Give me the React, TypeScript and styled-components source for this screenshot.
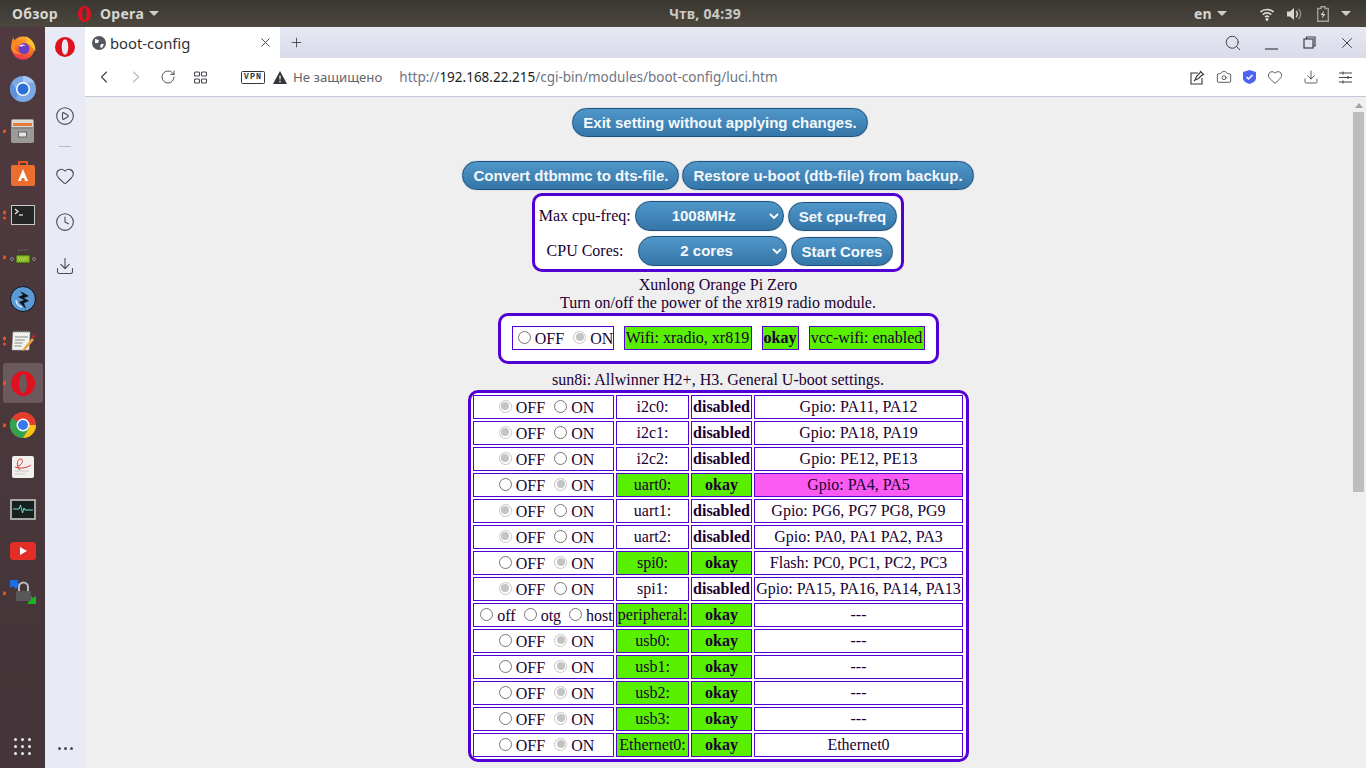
import React from 'react';
import styled, { createGlobalStyle } from 'styled-components';
import { ChevronLeft, ChevronRight, RotateCw, Search, X, Plus, Heart, Clock, Download, Camera, CirclePlay } from 'lucide-react';

const GlobalStyle = createGlobalStyle`
  html, body {
    margin: 0;
    padding: 0;
    overflow: hidden;
  }
`;

const Screen = styled.div`
  width: 1366px;
  height: 768px;
  display: flex;
  flex-direction: column;
  overflow: hidden;
  font-family: 'Liberation Serif', serif;
`;

const TopBar = styled.div`
  height: 27px;
  flex: none;
  display: grid;
  grid-template-columns: 1fr auto 1fr;
  align-items: center;
  background: linear-gradient(#3a3731, #4c4840);
  color: #d6d6d2;
  font: 700 14px 'Noto Sans', sans-serif;
  letter-spacing: 0.3px;
`;

const TopLeft = styled.div`
  display: flex;
  align-items: center;
  padding-left: 12px;
  gap: 20px;
`;

const AppMenu = styled.div`
  display: flex;
  align-items: center;
  gap: 5px;
`;

const AppName = styled.span`
  margin-left: 4px;
`;

const TopClock = styled.span`
  padding-left: 44px;
  color: #c9c9c5;
`;

const TopRight = styled.div`
  display: flex;
  align-items: center;
  justify-content: flex-end;
  padding-right: 15px;
`;

const TrayItem = styled.span<{ $ml: number }>`
  display: flex;
  margin-left: ${(p) => p.$ml}px;
`;

const Caret = styled.span`
  width: 0;
  height: 0;
  border-left: 5px solid transparent;
  border-right: 5px solid transparent;
  border-top: 5px solid #cfcfca;
`;

const Main = styled.div`
  flex: 1;
  display: flex;
  min-height: 0;
`;

const Dock = styled.div`
  width: 45px;
  flex: none;
  background: linear-gradient(#503a3f, #433539);
  display: flex;
  flex-direction: column;
  align-items: center;
  gap: 2px;
`;

const DockSlot = styled.div<{ $active?: boolean }>`
  position: relative;
  width: 40px;
  height: 40px;
  flex: none;
  display: flex;
  align-items: center;
  justify-content: center;
  border-radius: 3px;
  background: ${(p) => (p.$active ? '#6a5a5e' : 'transparent')};
`;

const Pips = styled.div`
  position: absolute;
  left: 0;
  top: 50%;
  transform: translateY(-50%);
  display: flex;
  flex-direction: column;
  gap: 2px;
`;

const Pip = styled.span`
  width: 3.5px;
  height: 3.5px;
  border-radius: 50%;
  background: #e95420;
`;

const DockGrid = styled.div`
  margin-top: auto;
  margin-bottom: 13px;
  display: grid;
  grid-template-columns: repeat(3, 3px);
  gap: 4px;
`;

const DockDot = styled.span`
  width: 3px;
  height: 3px;
  background: #eee;
  border-radius: 50%;
`;

const Browser = styled.div`
  flex: 1;
  display: flex;
  min-width: 0;
`;

const SideRail = styled.div`
  width: 40px;
  flex: none;
  background: #e8ebf5;
  display: flex;
  flex-direction: column;
  align-items: center;
  color: #4a4c52;
`;

const RailLogo = styled.div`
  height: 40px;
  display: flex;
  align-items: center;
  justify-content: center;
`;

const RailItem = styled.div<{ $mt: number }>`
  margin-top: ${(p) => p.$mt}px;
  display: flex;
`;

const RailDivider = styled.div`
  width: 12px;
  height: 1px;
  background: #b9bcc6;
  margin-top: 20px;
`;

const RailMore = styled.div`
  margin-top: auto;
  margin-bottom: 18px;
  display: flex;
  gap: 3px;
`;

const RailDot = styled.span`
  width: 3px;
  height: 3px;
  border-radius: 50%;
  background: #4a4c52;
`;

const BrowserBody = styled.div`
  flex: 1;
  display: flex;
  flex-direction: column;
  min-width: 0;
`;

const TabStrip = styled.div`
  height: 31px;
  flex: none;
  display: flex;
  align-items: center;
  background: linear-gradient(#e6e9f4, #d9dce8);
  color: #3e4046;
`;

const Tab = styled.div`
  width: 195px;
  height: 31px;
  background: #fff;
  display: flex;
  align-items: center;
  padding: 0 7px;
  box-sizing: border-box;
  gap: 4px;
  font: 14.8px 'Noto Sans', sans-serif;
  color: #2f3136;
`;

const TabTitle = styled.span`
  flex: 1;
`;

const TabPlus = styled.div`
  display: flex;
  margin-left: 9px;
`;

const WindowControls = styled.div`
  margin-left: auto;
  display: flex;
  align-items: center;
`;

const WindowSlot = styled.div`
  width: 38px;
  display: flex;
  justify-content: center;
`;

const AddressBar = styled.div`
  height: 38px;
  flex: none;
  background: #fff;
  border-bottom: 1px solid #c3c7d6;
  display: flex;
  align-items: center;
  color: #44464c;
`;

const NavGroup = styled.div`
  display: flex;
  align-items: center;
  gap: 12px;
  padding-left: 9px;
`;

const ReloadIcon = styled(RotateCw)`
  margin-left: 2px;
`;

const SpeedDial = styled.svg`
  margin-left: 6px;
`;

const VpnBadge = styled.span`
  margin-left: 34px;
  box-sizing: border-box;
  width: 24px;
  height: 13px;
  display: flex;
  align-items: center;
  justify-content: center;
  font: 700 8.5px 'Liberation Mono', monospace;
  letter-spacing: 1px;
  border: 1px solid #33353a;
  border-radius: 1.5px;
  color: #33353a;
`;

const WarnIcon = styled.svg`
  margin-left: 8px;
`;

const Insecure = styled.span`
  margin-left: 6px;
  font: 13.2px 'Noto Sans', sans-serif;
  color: #62646a;
`;

const Url = styled.span`
  margin-left: 17px;
  font: 13.5px 'Noto Sans', sans-serif;
  color: #6d7484;
`;

const UrlHost = styled.span`
  color: #1c1d20;
`;

const AddressTools = styled.div`
  margin-left: auto;
  display: flex;
  align-items: center;
  gap: 11px;
  padding-right: 14px;
`;

const ToolGap = styled.span`
  display: flex;
  margin-left: 9px;
`;

const PageRow = styled.div`
  flex: 1;
  display: flex;
  min-height: 0;
`;

const Page = styled.div`
  flex: 1;
  background: #efefef;
  display: flex;
  flex-direction: column;
  align-items: center;
  font-size: 16px;
  color: #1a0033;
  padding-top: 11px;
  min-width: 0;
`;

const Scrollbar = styled.div`
  width: 15px;
  flex: none;
  background: #efefef;
  display: flex;
  flex-direction: column;
  padding-top: 6px;
  box-sizing: border-box;
`;

const ScrollArrow = styled.span`
  width: 0;
  height: 0;
  margin-left: 4px;
  border-left: 4px solid transparent;
  border-right: 4px solid transparent;
  border-bottom: 5px solid #a3a3a3;
`;

const ScrollThumb = styled.div`
  height: 380px;
  width: 11px;
  margin: 4px 0 0 2px;
  background: #bdbdbd;
`;

const PillButton = styled.div<{ $h?: number }>`
  height: ${(p) => p.$h ?? 29}px;
  box-sizing: border-box;
  padding: 0 10px;
  display: flex;
  align-items: center;
  justify-content: center;
  border-radius: 15px;
  border: 1px solid #1c527f;
  box-shadow: 0 0 1px rgba(20, 50, 80, 0.5);
  background: linear-gradient(#5097c9, #3575a8);
  color: #f4f8fb;
  font: 700 15px 'Liberation Sans', sans-serif;
  white-space: nowrap;
  flex: none;
`;

const ExitButton = styled(PillButton)`
  margin-left: 4px;
`;

const ButtonRow = styled.div`
  display: flex;
  gap: 3px;
  margin-top: 24px;
  margin-bottom: 3px;
`;

const Frame = styled.div`
  border: 3px solid #5300d5;
  border-radius: 10px;
  background: #fff;
  box-sizing: border-box;
`;

const CpuFrame = styled(Frame)`
  width: 372px;
  height: 79px;
  padding-top: 5px;
  display: flex;
  flex-direction: column;
  align-items: center;
  gap: 5px;
`;

const CpuRow = styled.div<{ $shift?: number }>`
  display: flex;
  align-items: flex-end;
  gap: 4px;
  padding-left: ${(p) => p.$shift ?? 0}px;
`;

const CpuLabel = styled.span<{ $w: number }>`
  width: ${(p) => p.$w}px;
  align-self: center;
`;

const SelectPill = styled(PillButton)`
  position: relative;
  width: 149px;
  padding: 0 21px 1px 10px;
`;

const SelectArrow = styled.svg`
  position: absolute;
  right: 4px;
  top: 11px;
`;

const Caption = styled.div<{ $mt: number }>`
  text-align: center;
  line-height: 18px;
  margin-top: ${(p) => p.$mt}px;
`;

const WifiFrame = styled(Frame)`
  width: 441px;
  height: 51px;
  margin-top: 1px;
  padding-bottom: 1px;
  display: flex;
  align-items: center;
  justify-content: center;
  gap: 10px;
`;

const Cell = styled.div<{ $green?: boolean; $pink?: boolean; $bold?: boolean; $w?: number }>`
  box-sizing: border-box;
  height: 24px;
  flex: none;
  width: ${(p) => (p.$w ? `${p.$w}px` : 'auto')};
  display: flex;
  align-items: center;
  justify-content: center;
  border: 1px solid #5300d5;
  white-space: nowrap;
  font-weight: ${(p) => (p.$bold ? 700 : 400)};
  background: ${(p) => (p.$green ? '#58ef00' : p.$pink ? '#fb5bf1' : '#fff')};
`;

const RadioCell = styled(Cell)`
  padding-left: 6px;
`;

const Radio = styled.span<{ $on?: boolean }>`
  display: inline-block;
  position: relative;
  box-sizing: border-box;
  width: 13px;
  height: 13px;
  border-radius: 50%;
  border: 1px solid ${(p) => (p.$on ? '#c4c4c4' : '#767676')};
  background: #fff;
  margin: 0 4px 3px 0;
  flex: none;

  &::after {
    content: '';
    display: ${(p) => (p.$on ? 'block' : 'none')};
    position: absolute;
    inset: 1.5px;
    border-radius: 50%;
    background: #c4c4c4;
  }
`;

const RadioLabel = styled.span`
  display: inline-flex;
  align-items: center;
  margin-top: 1px;
`;

const RadioGroup = styled.div<{ $gap: number }>`
  display: flex;
  align-items: center;
  gap: ${(p) => p.$gap}px;
`;

const BoardFrame = styled(Frame)`
  width: 501px;
  margin-top: 1px;
  padding: 2px 3px;
  display: flex;
  flex-direction: column;
  gap: 2px;
`;

const BoardRow = styled.div`
  display: grid;
  grid-template-columns: 141px 73px 61px 209px;
  gap: 2px;
  justify-content: center;
`;

interface RowData {
  name: string;
  on: boolean;
  info: string;
  pink?: boolean;
  usb?: boolean;
}

const rows: RowData[] = [
  { name: 'i2c0:', on: false, info: 'Gpio: PA11, PA12' },
  { name: 'i2c1:', on: false, info: 'Gpio: PA18, PA19' },
  { name: 'i2c2:', on: false, info: 'Gpio: PE12, PE13' },
  { name: 'uart0:', on: true, info: 'Gpio: PA4, PA5', pink: true },
  { name: 'uart1:', on: false, info: 'Gpio: PG6, PG7 PG8, PG9' },
  { name: 'uart2:', on: false, info: 'Gpio: PA0, PA1 PA2, PA3' },
  { name: 'spi0:', on: true, info: 'Flash: PC0, PC1, PC2, PC3' },
  { name: 'spi1:', on: false, info: 'Gpio: PA15, PA16, PA14, PA13' },
  { name: 'peripheral:', on: true, info: '---', usb: true },
  { name: 'usb0:', on: true, info: '---' },
  { name: 'usb1:', on: true, info: '---' },
  { name: 'usb2:', on: true, info: '---' },
  { name: 'usb3:', on: true, info: '---' },
  { name: 'Ethernet0:', on: true, info: 'Ethernet0' },
];

const OperaLogo = ({ w, h }: { w: number; h: number }) => (
  <svg width={w} height={h} viewBox="0 0 24 24" preserveAspectRatio="none">
    <path
      fill="#e0101f"
      fillRule="evenodd"
      d="M12 0a12 12 0 1 0 0 24 12 12 0 0 0 0-24Zm0 2.8c-2.300 0-3.900 4-3.900 9.200s1.600 9.200 3.900 9.200 3.900-4 3.900-9.200-1.600-9.200-3.900-9.200Z"
    />
  </svg>
);

const DockIcons: { key: string; pips: number; active?: boolean; icon: React.ReactNode }[] = [
  {
    key: 'firefox',
    pips: 0,
    icon: (
      <svg width="26" height="26" viewBox="0 0 26 26">
        <defs>
          <linearGradient id="foxBody" x1="0.7" y1="0" x2="0.3" y2="1">
            <stop offset="0" stopColor="#ffb52b" />
            <stop offset="0.6" stopColor="#f6672a" />
            <stop offset="1" stopColor="#ee2d5c" />
          </linearGradient>
        </defs>
        <circle cx="13" cy="14" r="11.500" fill="url(#foxBody)" />
        <path d="M15 0c1 3 4 4 6.500 6.500 3 3 4.500 7 3.500 11-2-4-5-7.500-9-8.500 1-3 1-6-1-9Z" fill="#ffc22e" />
        <path d="M1.500 10c0-3 1-5 2-6.500 0 2 1 3 2 3.500 2-1 5-1 7 0-2 1-3 2-3 3.500-3 0-4.500 1-4.500 3.500 0 3 3.500 5.500 8 5-6 3-14-1-11.500-9Z" fill="#fb8a24" />
        <circle cx="14" cy="14.500" r="5.500" fill="#6a3fc0" />
        <path d="M9 11.500c2-1.500 5-1.500 7 0-2 0-4 .5-5 1.500Z" fill="#f2d0ff" />
      </svg>
    ),
  },
  {
    key: 'chromium',
    pips: 0,
    icon: (
      <svg width="26" height="26" viewBox="0 0 26 26">
        <circle cx="13" cy="13" r="13" fill="#7aa9e6" />
        <path d="M13 0a13 13 0 0 1 11.300 6.500H13Z" fill="#a5c8f0" />
        <path d="M1.700 6.500L8 17l-2 6A13 13 0 0 1 1.700 6.500Z" fill="#5c8edb" />
        <circle cx="13" cy="13" r="7" fill="#fff" />
        <circle cx="13" cy="13" r="5.500" fill="#2c6fd6" />
      </svg>
    ),
  },
  {
    key: 'files',
    pips: 1,
    icon: (
      <svg width="23" height="24" viewBox="0 0 23 24">
        <rect width="23" height="24" rx="2" fill="#9a9a98" />
        <rect x="1" y="1" width="21" height="7" fill="#d9d9d6" />
        <rect x="2" y="4" width="19" height="3" fill="#e8793a" />
        <path d="M1 9h21" stroke="#777" />
        <rect x="7.500" y="13" width="8" height="5" fill="#e4e4e2" stroke="#666" />
      </svg>
    ),
  },
  {
    key: 'software',
    pips: 0,
    icon: (
      <svg width="24" height="25" viewBox="0 0 24 25">
        <path d="M8 4V1h8v3" fill="none" stroke="#e95420" strokeWidth="2" />
        <rect y="4" width="24" height="21" rx="2" fill="#ed6d2f" />
        <path d="M12 8l5 12h-3l-.8-3h-2.400L10 20H7Z" fill="#fff" />
      </svg>
    ),
  },
  {
    key: 'terminal',
    pips: 2,
    icon: (
      <svg width="24" height="20" viewBox="0 0 24 20">
        <rect width="24" height="20" fill="#c8c8c6" />
        <rect x="1" y="1" width="22" height="18" fill="#262626" />
        <path d="M4 4l3 2.500L4 9" stroke="#eee" strokeWidth="1.200" fill="none" />
        <path d="M8 10h4" stroke="#eee" strokeWidth="1.200" />
      </svg>
    ),
  },
  {
    key: 'serial',
    pips: 1,
    icon: (
      <svg width="26" height="18" viewBox="0 0 26 18">
        <circle cx="2" cy="11" r="1.500" fill="none" stroke="#888" />
        <circle cx="24" cy="11" r="1.500" fill="none" stroke="#888" />
        <rect x="6" y="7" width="14" height="8" rx="1" fill="#86b82a" stroke="#2f4d12" />
        <path d="M8 10h10M9 12h8" stroke="#dbe86a" strokeDasharray="1 1" />
        <path d="M8 2h10" stroke="#5c5456" strokeDasharray="2 1" strokeWidth="2" />
      </svg>
    ),
  },
  {
    key: 'bolt',
    pips: 0,
    icon: (
      <svg width="26" height="26" viewBox="0 0 26 26">
        <circle cx="13" cy="13" r="12.500" fill="#5b9bd5" stroke="#101418" />
        <path d="M6 14a8 8 0 0 0 6 7" fill="none" stroke="#e8f2fb" strokeWidth="1.300" />
        <path d="M10 5l9 5-5 2 5 3-5 2 2 6-7-7 5-2-6-3 5-2Z" fill="#101418" />
      </svg>
    ),
  },
  {
    key: 'editor',
    pips: 2,
    icon: (
      <svg width="24" height="22" viewBox="0 0 24 22">
        <path d="M2 2h17l-1 18H1Z" fill="#f3f3ee" stroke="#aaa" strokeWidth="0.500" />
        <path d="M3 1.500h15" stroke="#777" strokeWidth="1.500" strokeDasharray="1 1" />
        <path d="M4 7h13M4 10h10M3.500 13h8M3.500 16h7" stroke="#888" />
        <path d="M12 19l9-11 2 2-9 10-3 1Z" fill="#e9a13b" />
        <path d="M21.500 5.500l2 2" stroke="#d22" strokeWidth="2" />
      </svg>
    ),
  },
  { key: 'opera', pips: 1, active: true, icon: <OperaLogo w={24} h={25} /> },
  {
    key: 'chrome',
    pips: 1,
    icon: (
      <svg width="26" height="26" viewBox="0 0 26 26">
        <circle cx="13" cy="13" r="13" fill="#e53c2e" />
        <path d="M13 13L1.700 19.500A13 13 0 0 1 2 6Z" fill="#2ea44f" />
        <path d="M13 13h13a13 13 0 0 1-24.300 6.500L8 15Z" fill="#2ea44f" />
        <path d="M13 13l6-0h7a13 13 0 0 1-13 13l6-10Z" fill="#fbc116" />
        <circle cx="13" cy="13" r="6.500" fill="#fff" />
        <circle cx="13" cy="13" r="5" fill="#3b78e7" />
      </svg>
    ),
  },
  {
    key: 'doc',
    pips: 0,
    icon: (
      <svg width="22" height="22" viewBox="0 0 22 22">
        <rect width="22" height="22" rx="2" fill="#f1f0ee" />
        <path d="M3 11c6 2 12 1 16-2M8 14C3 9 6 2 9 3c3 1 1 6-3 7" fill="none" stroke="#d7332c" />
        <path d="M3 15h14M3 18h10" stroke="#c9c9c6" />
      </svg>
    ),
  },
  {
    key: 'monitor',
    pips: 0,
    icon: (
      <svg width="26" height="21" viewBox="0 0 26 21">
        <rect width="26" height="21" fill="#a8a8a6" />
        <rect x="2" y="2" width="22" height="17" fill="#16211f" />
        <path d="M3 10h6l1.500-4 2 8 1.500-5 1 2h8" fill="none" stroke="#6fe0c4" />
      </svg>
    ),
  },
  {
    key: 'youtube',
    pips: 0,
    icon: (
      <svg width="26" height="18" viewBox="0 0 26 18">
        <rect width="26" height="18" rx="3.500" fill="#e52d27" />
        <path d="M10 5l7 4-7 4Z" fill="#fff" />
      </svg>
    ),
  },
  {
    key: 'lock',
    pips: 1,
    icon: (
      <svg width="26" height="26" viewBox="0 0 26 26">
        <path d="M0 0h9L7 2l3 3-4 4-3-3-3 2Z" fill="#1a6fe8" />
        <path d="M26 24h-9l2-2-3-3 4-4 3 3 3-2Z" fill="#19b51e" />
        <path d="M9 11V7a4.500 4.500 0 0 1 9 0v4" fill="none" stroke="#bbb" strokeWidth="2" />
        <rect x="6" y="11" width="15" height="10" rx="1" fill="#585858" />
      </svg>
    ),
  },
];

const App: React.FC = () => (
  <Screen>
    <GlobalStyle />
    <TopBar>
      <TopLeft>
        <span>Обзор</span>
        <AppMenu>
          <OperaLogo w={13} h={16} />
          <AppName>Opera</AppName>
          <Caret />
        </AppMenu>
      </TopLeft>
      <TopClock>Чтв, 04:39</TopClock>
      <TopRight>
        <span>en</span>
        <TrayItem $ml={5}>
          <Caret />
        </TrayItem>
        <TrayItem $ml={33}>
          <svg width="14" height="14" viewBox="0 0 14 14" fill="none" stroke="#dededa" strokeWidth="1.600">
            <path d="M.5 5a9.500 9.500 0 0 1 13 0M2.800 7.600a6 6 0 0 1 8.400 0M5 10a3 3 0 0 1 4 0" />
            <circle cx="7" cy="12.500" r="1.400" fill="#dededa" stroke="none" />
          </svg>
        </TrayItem>
        <TrayItem $ml={13}>
          <svg width="15" height="14" viewBox="0 0 15 14" fill="none">
            <path d="M0 4.500h3L7 1v12L3 9.500H0Z" fill="#d6d6d2" />
            <path d="M9 4a4 4 0 0 1 0 6" stroke="#d6d6d2" strokeWidth="1.400" />
            <path d="M11.500 2a7 7 0 0 1 0 10" stroke="#8f8f8a" strokeWidth="1.400" />
          </svg>
        </TrayItem>
        <TrayItem $ml={15}>
          <svg width="12" height="16" viewBox="0 0 12 16">
            <path d="M4 .7h4v1.800h3.300v12.800H.7V2.500H4Z" fill="none" stroke="#a0a09b" strokeWidth="1.400" />
            <path d="M7 4.500L3.500 9h2.300L5 12.500 8.500 8H6.200Z" fill="#d6d6d2" />
          </svg>
        </TrayItem>
        <TrayItem $ml={12}>
          <Caret />
        </TrayItem>
      </TopRight>
    </TopBar>
    <Main>
      <Dock>
        {DockIcons.map((d) => (
          <DockSlot key={d.key} $active={d.active}>
            {d.pips > 0 && (
              <Pips>
                {Array.from({ length: d.pips }).map((_, i) => (
                  <Pip key={i} />
                ))}
              </Pips>
            )}
            {d.icon}
          </DockSlot>
        ))}
        <DockGrid>
          {Array.from({ length: 9 }).map((_, i) => (
            <DockDot key={i} />
          ))}
        </DockGrid>
      </Dock>
      <Browser>
        <SideRail>
          <RailLogo>
            <OperaLogo w={20} h={20} />
          </RailLogo>
          <RailItem $mt={39}>
            <CirclePlay size={20} strokeWidth={1.3} />
          </RailItem>
          <RailDivider />
          <RailItem $mt={19}>
            <Heart size={20} strokeWidth={1.3} />
          </RailItem>
          <RailItem $mt={26}>
            <Clock size={20} strokeWidth={1.3} />
          </RailItem>
          <RailItem $mt={24}>
            <Download size={20} strokeWidth={1.3} />
          </RailItem>
          <RailMore>
            <RailDot />
            <RailDot />
            <RailDot />
          </RailMore>
        </SideRail>
        <BrowserBody>
          <TabStrip>
            <Tab>
              <svg width="14" height="14" viewBox="0 0 14 14">
                <circle cx="7" cy="7" r="7" fill="#55575c" />
                <path d="M3 3l4 1-1 3-3 0ZM9 8l3 0-2 4-2-1Z" fill="#fff" />
              </svg>
              <TabTitle>boot-config</TabTitle>
              <X size={15} strokeWidth={1.4} />
            </Tab>
            <TabPlus>
              <Plus size={15} strokeWidth={1.4} />
            </TabPlus>
            <WindowControls>
              <WindowSlot>
                <Search size={18} strokeWidth={1.3} />
              </WindowSlot>
              <WindowSlot>
                <svg width="13" height="17" viewBox="0 0 13 17" stroke="#3e4046" strokeWidth="1.200">
                  <path d="M0 15h13" />
                </svg>
              </WindowSlot>
              <WindowSlot>
                <svg width="13" height="13" viewBox="0 0 13 13" fill="none" stroke="#3e4046" strokeWidth="1.200">
                  <rect x="1" y="3" width="9" height="9" />
                  <path d="M3.500 3V1H12v9h-2" />
                </svg>
              </WindowSlot>
              <WindowSlot>
                <X size={18} strokeWidth={1.3} />
              </WindowSlot>
            </WindowControls>
          </TabStrip>
          <AddressBar>
            <NavGroup>
              <ChevronLeft size={20} strokeWidth={1.4} />
              <ChevronRight size={20} strokeWidth={1.4} color="#b9bbc2" />
              <ReloadIcon size={16} strokeWidth={1.4} />
              <SpeedDial width="13" height="13" viewBox="0 0 13 13" fill="none" stroke="#44464c" strokeWidth="1.100">
                <rect x=".5" y="1" width="5" height="4" rx="1" />
                <rect x="7.500" y="1" width="5" height="4" rx="1" />
                <rect x=".5" y="8" width="5" height="4" rx="1" />
                <rect x="7.500" y="8" width="5" height="4" rx="1" />
              </SpeedDial>
            </NavGroup>
            <VpnBadge>VPN</VpnBadge>
            <WarnIcon width="14" height="13" viewBox="0 0 14 13">
              <path d="M7 0l7 13H0Z" fill="#33353a" />
              <path d="M7 4.500v4M7 9.800v1.400" stroke="#fff" strokeWidth="1.200" />
            </WarnIcon>
            <Insecure>Не защищено</Insecure>
            <Url>
              http://<UrlHost>192.168.22.215</UrlHost>/cgi-bin/modules/boot-config/luci.htm
            </Url>
            <AddressTools>
              <svg width="15" height="15" viewBox="0 0 15 15" fill="none" stroke="#33353a" strokeWidth="1.100">
                <path d="M8 3H1v11h11V8M5 10l1.500-3.500 3-3 1-2 3 3-2 1-3 3ZM4 11l2-2" />
              </svg>
              <Camera size={16} strokeWidth={1.3} />
              <svg width="13" height="14" viewBox="0 0 13 14">
                <path d="M6.500 0L13 2v6c0 3-3 5-6.500 6C3 13 0 11 0 8V2Z" fill="#4d63f5" />
                <path d="M3.500 7l2 2 4-4" stroke="#fff" strokeWidth="1.500" fill="none" />
              </svg>
              <Heart size={16} strokeWidth={1.3} />
              <ToolGap>
                <Download size={16} strokeWidth={1.3} />
              </ToolGap>
              <ToolGap>
                <svg width="13" height="13" viewBox="0 0 13 13" fill="none" stroke="#44464c" strokeWidth="1.100">
                  <path d="M0 2h13M0 6.500h13M0 11h13M4 .5v3M9 5v3M4 9.500v3" />
                </svg>
              </ToolGap>
            </AddressTools>
          </AddressBar>
          <PageRow>
            <Page>
              <ExitButton>Exit setting without applying changes.</ExitButton>
              <ButtonRow>
                <PillButton>Convert dtbmmc to dts-file.</PillButton>
                <PillButton>Restore u-boot (dtb-file) from backup.</PillButton>
              </ButtonRow>
              <CpuFrame>
                <CpuRow>
                  <CpuLabel $w={92}>Max cpu-freq:</CpuLabel>
                  <SelectPill $h={30}>
                    1008MHz
                    <SelectArrow width="10" height="7" viewBox="0 0 10 7" fill="none" stroke="#fff" strokeWidth="1.800">
                      <path d="M1 1l4 4 4-4" />
                    </SelectArrow>
                  </SelectPill>
                  <PillButton>Set cpu-freq</PillButton>
                </CpuRow>
                <CpuRow $shift={4}>
                  <CpuLabel $w={87}>CPU Cores:</CpuLabel>
                  <SelectPill $h={30}>
                    2 cores
                    <SelectArrow width="10" height="7" viewBox="0 0 10 7" fill="none" stroke="#fff" strokeWidth="1.800">
                      <path d="M1 1l4 4 4-4" />
                    </SelectArrow>
                  </SelectPill>
                  <PillButton>Start Cores</PillButton>
                </CpuRow>
              </CpuFrame>
              <Caption $mt={4}>
                Xunlong Orange Pi Zero
                <br />
                Turn on/off the power of the xr819 radio module.
              </Caption>
              <WifiFrame>
                <RadioCell $w={102}>
                  <RadioGroup $gap={9}>
                    <RadioLabel>
                      <Radio />
                      OFF
                    </RadioLabel>
                    <RadioLabel>
                      <Radio $on />
                      ON
                    </RadioLabel>
                  </RadioGroup>
                </RadioCell>
                <Cell $green $w={128}>
                  Wifi: xradio, xr819
                </Cell>
                <Cell $green $bold $w={37}>
                  okay
                </Cell>
                <Cell $green $w={116}>
                  vcc-wifi: enabled
                </Cell>
              </WifiFrame>
              <Caption $mt={7}>sun8i: Allwinner H2+, H3. General U-boot settings.</Caption>
              <BoardFrame>
                {rows.map((r) => (
                  <BoardRow key={r.name}>
                    <RadioCell>
                      {r.usb ? (
                        <RadioGroup $gap={8}>
                          <RadioLabel>
                            <Radio />
                            off
                          </RadioLabel>
                          <RadioLabel>
                            <Radio />
                            otg
                          </RadioLabel>
                          <RadioLabel>
                            <Radio />
                            host
                          </RadioLabel>
                        </RadioGroup>
                      ) : (
                        <RadioGroup $gap={9}>
                          <RadioLabel>
                            <Radio $on={!r.on} />
                            OFF
                          </RadioLabel>
                          <RadioLabel>
                            <Radio $on={r.on} />
                            ON
                          </RadioLabel>
                        </RadioGroup>
                      )}
                    </RadioCell>
                    <Cell $green={r.on}>{r.name}</Cell>
                    <Cell $green={r.on} $bold>
                      {r.on ? 'okay' : 'disabled'}
                    </Cell>
                    <Cell $pink={r.pink}>{r.info}</Cell>
                  </BoardRow>
                ))}
              </BoardFrame>
            </Page>
            <Scrollbar>
              <ScrollArrow />
              <ScrollThumb />
            </Scrollbar>
          </PageRow>
        </BrowserBody>
      </Browser>
    </Main>
  </Screen>
);

export default App;
